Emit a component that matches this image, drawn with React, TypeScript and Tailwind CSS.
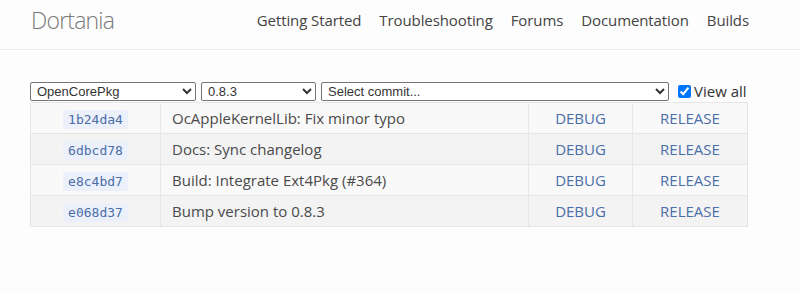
const navLinks = ["Getting Started", "Troubleshooting", "Forums", "Documentation", "Builds"];

const commits = [
  { hash: "1b24da4", message: "OcAppleKernelLib: Fix minor typo" },
  { hash: "6dbcd78", message: "Docs: Sync changelog" },
  { hash: "e8c4bd7", message: "Build: Integrate Ext4Pkg (#364)" },
  { hash: "e068d37", message: "Bump version to 0.8.3" },
];

export default function App() {
  return (
    <div className="min-h-[294px] bg-[#fdfdfd] font-['Open_Sans',sans-serif] text-[#333]">
      <header className="flex h-[50px] items-center justify-between border-b border-[#ececec] pb-[9px] pl-[31px] pr-[51px]">
        <span className="text-[23px] font-light tracking-[-0.8px] text-[#7a7a7a]">Dortania</span>
        <nav className="flex gap-[18px] text-[15px] tracking-[-0.1px] text-[#444]">
          {navLinks.map((link) => (
            <a key={link} href="#" className="hover:underline">
              {link}
            </a>
          ))}
        </nav>
      </header>

      <main className="px-[30px] pt-[32px]">
        <div className="flex h-[19px] items-center gap-[5px] font-['Liberation_Sans',sans-serif] text-[13px]">
          <select className="h-[19px] w-[166px] rounded-[2px] border border-[#767676] bg-white px-[2px] text-[13px]">
            <option>OpenCorePkg</option>
          </select>
          <select className="h-[19px] w-[115px] rounded-[2px] border border-[#767676] bg-white px-[2px] text-[13px]">
            <option>0.8.3</option>
          </select>
          <select className="h-[19px] w-[348px] rounded-[2px] border border-[#767676] bg-white px-[2px] text-[13px]">
            <option>Select commit...</option>
          </select>
          <label className="ml-[4px] flex items-center gap-[3px] font-['Open_Sans',sans-serif] text-[15px] leading-none text-[#333]">
            <input type="checkbox" defaultChecked className="h-[13px] w-[13px] accent-[#0075ff]" />
            View all
          </label>
        </div>

        <table className="mt-[1px] w-[718px] border-collapse border border-[#e6e6e6] text-[15px]">
          <tbody>
            {commits.map((c, i) => (
              <tr key={c.hash} className={i % 2 === 0 ? "h-[31px] bg-[#f9f9f9]" : "h-[31px] bg-[#f3f3f3]"}>
                <td className="w-[130px] border border-[#e6e6e6] text-center">
                  <code className="rounded-[3px] bg-[#ecf0fa] px-[5px] py-[2px] font-['DejaVu_Sans_Mono',monospace] text-[13px] text-[#4a6ea8]">
                    {c.hash}
                  </code>
                </td>
                <td className="w-[368px] border border-[#e6e6e6] pl-[11px] text-[#4a4a4a]">{c.message}</td>
                <td className="w-[104px] border border-[#e6e6e6] text-center">
                  <a href="#" className="text-[#4a6ea8]">DEBUG</a>
                </td>
                <td className="border border-[#e6e6e6] text-center">
                  <a href="#" className="text-[#4a6ea8]">RELEASE</a>
                </td>
              </tr>
            ))}
          </tbody>
        </table>
      </main>
    </div>
  );
}
